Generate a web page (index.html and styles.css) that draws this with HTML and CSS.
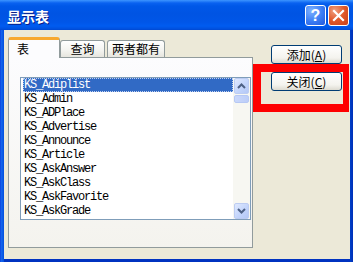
FILE: index.html
```html
<!DOCTYPE html>
<html>
<head>
<meta charset="utf-8">
<link rel="stylesheet" href="styles.css">
</head>
<body>
<div class="window">
  <div class="titlebar">
    <span class="title">显示表</span>
    <div class="tbuttons">
      <div class="tbtn help">?</div>
      <div class="tbtn close">
        <svg width="13" height="13" viewBox="0 0 13 13"><path d="M2 2 L11 11 M11 2 L2 11" stroke="#fff" stroke-width="2.2" stroke-linecap="square"/></svg>
      </div>
    </div>
  </div>
  <div class="frame">
    <div class="client">
      <div class="tabctl">
        <div class="tabs">
          <div class="tab sel">表</div>
          <div class="tab t2">查询</div>
          <div class="tab t3">两者都有</div>
        </div>
        <div class="panel">
          <div class="listbox">
            <div class="items">
              <div class="item selitem">KS_Adiplist</div>
              <div class="item">KS_Admin</div>
              <div class="item">KS_ADPlace</div>
              <div class="item">KS_Advertise</div>
              <div class="item">KS_Announce</div>
              <div class="item">KS_Article</div>
              <div class="item">KS_AskAnswer</div>
              <div class="item">KS_AskClass</div>
              <div class="item">KS_AskFavorite</div>
              <div class="item">KS_AskGrade</div>
            </div>
            <div class="vscroll">
              <div class="sbtn">
                <svg width="9" height="6" viewBox="0 0 9 6"><path d="M1 5 L4.5 1.5 L8 5" fill="none" stroke="#4d6185" stroke-width="2"/></svg>
              </div>
              <div class="thumb"></div>
              <div class="track"></div>
              <div class="sbtn">
                <svg width="9" height="6" viewBox="0 0 9 6"><path d="M1 1 L4.5 4.5 L8 1" fill="none" stroke="#4d6185" stroke-width="2"/></svg>
              </div>
            </div>
          </div>
        </div>
      </div>
      <div class="buttons">
        <div class="btn">添加(<u>A</u>)</div>
        <div class="btn">关闭(<u>C</u>)</div>
      </div>
    </div>
  </div>
  <div class="highlight"></div>
</div>
</body>
</html>
```

FILE: styles.css
```css
html, body {
  margin: 0;
  padding: 0;
}
body {
  width: 353px;
  height: 262px;
  overflow: hidden;
  background: #ece9d8;
  font-family: "Noto Sans CJK SC", sans-serif;
}
.window {
  position: relative;
  width: 353px;
  height: 262px;
  display: flex;
  flex-direction: column;
}
.titlebar {
  height: 30px;
  flex: none;
  display: flex;
  align-items: center;
  justify-content: space-between;
  padding: 0 4px 0 7px;
  box-sizing: border-box;
  background: linear-gradient(to bottom, #3d95ff 0px, #0a62f0 3px, #0058e8 6px, #0054e3 14px, #0056e8 22px, #005cf0 26px, #0050de 29px, #0047d0 30px);
}
.title {
  color: #fff;
  font-weight: bold;
  font-size: 14px;
  line-height: 16px;
  text-shadow: 1px 1px 0 #0a1e8a;
  margin-top: 1px;
}
.tbuttons {
  display: flex;
  gap: 2px;
  margin-top: 1px;
}
.tbtn {
  width: 21px;
  height: 21px;
  box-sizing: border-box;
  border: 1px solid #fff;
  border-radius: 3px;
  display: flex;
  align-items: center;
  justify-content: center;
  color: #fff;
  font-family: "Liberation Sans", sans-serif;
  font-weight: bold;
  font-size: 16px;
}
.help {
  background: radial-gradient(circle at 30% 25%, #7fb2ff 0%, #3a7cf4 55%, #2258dc 100%);
}
.close {
  background: radial-gradient(circle at 30% 25%, #f0a080 0%, #e0582a 50%, #c8401a 100%);
}
.frame {
  flex: 1;
  display: flex;
  padding: 0 3px 3px 4px;
  background: linear-gradient(to right, #0831d9 0px, #1668ee 1px, #0a58e4 3px, #0050e0 4px, #0050e0 349px, #0040c8 350px, #0030b8 353px);
}
.client {
  flex: 1;
  background: #ece9d8;
  display: flex;
  align-items: flex-start;
  box-shadow: 0 3px 0 #0033c0;
}
.tabctl {
  margin: 7px 0 0 4px;
  width: 245px;
  display: flex;
  flex-direction: column;
}
.tabs {
  display: flex;
  align-items: flex-end;
  height: 20px;
}
.tab {
  height: 17px;
  box-sizing: border-box;
  border: 1px solid #919b9c;
  border-bottom: 0;
  border-radius: 3px 3px 0 0;
  background: linear-gradient(to bottom, #ffffff, #f3f3ef 60%, #e6e5de);
  font-size: 12px;
  line-height: 16px;
  padding: 0;
  text-align: center;
  white-space: nowrap;
  color: #000;
  position: relative;
}
.tab.sel {
  height: 21px;
  width: 52px;
  margin-right: -1px;
  padding: 1px 8px 0 8px;
  text-align: left;
  border-top: 3px solid #f7a830;
  background: #fcfcfe;
  z-index: 2;
  margin-bottom: -1px;
}
.t2 {
  width: 45px;
  margin-left: 1px;
}
.t3 {
  width: 58px;
  margin-left: 2px;
}
.panel {
  height: 191px;
  box-sizing: border-box;
  border: 1px solid #919b9c;
  background: linear-gradient(to bottom, #fcfcfe, #f4f3ee);
  padding: 19px 1px 0 11px;
}
.listbox {
  width: 231px;
  height: 143px;
  box-sizing: border-box;
  border: 1px solid #7f9db9;
  background: #fff;
  display: flex;
}
.items {
  flex: 1;
  padding: 0 0 0 2px;
  font-family: "Liberation Mono", monospace;
  font-size: 12px;
  letter-spacing: -1.2px;
  color: #000;
}
.item {
  height: 14px;
  line-height: 14px;
  padding-left: 1px;
  white-space: nowrap;
}
.selitem {
  background: #316ac5;
  color: #fff;
  outline: 1px dotted #c0d0f0;
  outline-offset: -1px;
}
.vscroll {
  width: 17px;
  display: flex;
  flex-direction: column;
  background: #f7f7f2;
  padding: 0 1px 0 0;
  box-sizing: border-box;
}
.sbtn {
  height: 16px;
  margin: 0 0 0 1px;
  box-sizing: border-box;
  border: 1px solid #bcccf2;
  border-radius: 2px;
  background: linear-gradient(to bottom right, #dfe9ff, #c1d3fb 60%, #b4c8f6);
  display: flex;
  align-items: center;
  justify-content: center;
}
.thumb {
  height: 8px;
  margin: 1px 0 0 1px;
  box-sizing: border-box;
  border: 1px solid #b6c8f4;
  border-radius: 2px;
  background: linear-gradient(to right, #cad8fb, #bccdf8);
}
.track {
  flex: 1;
}
.buttons {
  margin: 15px 0 0 18px;
  display: flex;
  flex-direction: column;
  gap: 8px;
}
.btn {
  width: 71px;
  height: 19px;
  box-sizing: border-box;
  border: 1px solid #003c74;
  border-radius: 3px;
  background: linear-gradient(to bottom, #ffffff, #f4f3ee 70%, #dcdad0);
  font-size: 12px;
  line-height: 17px;
  text-align: center;
  color: #000;
}
.highlight {
  position: absolute;
  left: 253px;
  top: 64px;
  width: 96px;
  height: 48px;
  box-sizing: border-box;
  border: 8px solid #fe0000;
  border-right-width: 6px;
}
```
